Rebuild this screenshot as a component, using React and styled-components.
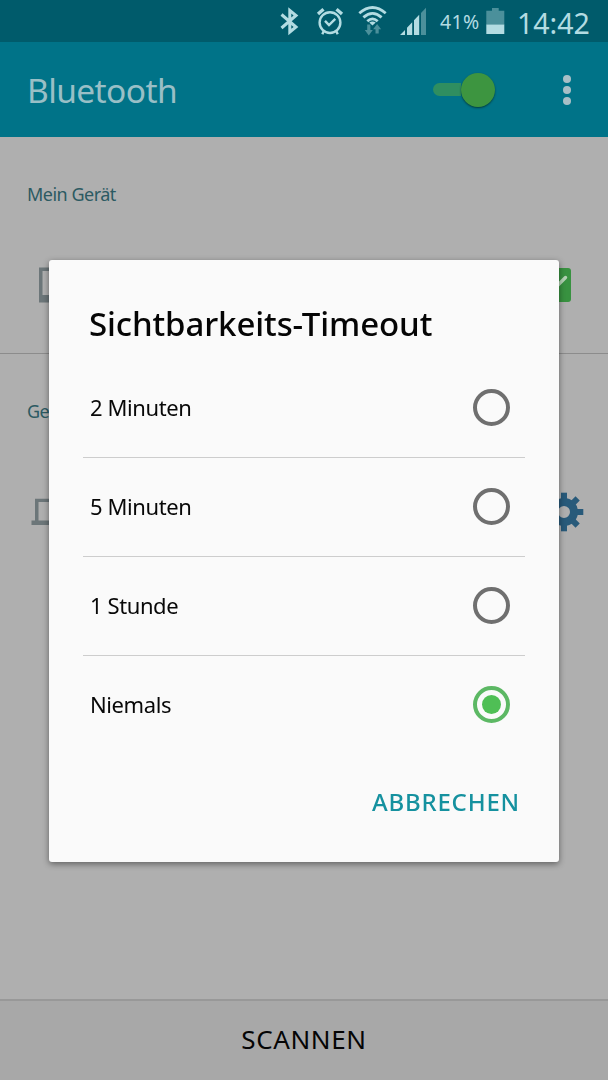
import React from 'react'
import styled, { createGlobalStyle } from 'styled-components';

const GlobalStyle = createGlobalStyle`
  body {
    margin : 0;
    font-family : "Noto Sans", "Open Sans", sans-serif;
    background-color : #afafaf;
  }
`;

const Screen = styled.div`
  width : 608px;
  height : 1080px;
  display : flex;
  flex-direction : column;
  overflow : hidden;
`;

const StatusBar = styled.div`
  height : 42px;
  flex : none;
  display : flex;
  align-items : center;
  box-sizing : border-box;
  padding-left : 280px;
  background-color : #005b6b;
  color : #b3dce2;
`;

const StatusIcon = styled.svg`
  flex : none;
  height : 42px;
  width : ${(props) => props.$width}px;
  margin-left : ${(props) => props.$gap || 0}px;
`;

const Percent = styled.span`
  width : 46px;
  margin-left : 12px;
  padding-top : 2px;
  font-size : 19.5px;
  line-height : 24px;
  letter-spacing : 0.3px;
  white-space : nowrap;
`;

const Clock = styled.span`
  margin-left : 12px;
  padding-top : 3px;
  font-size : 28.5px;
  line-height : 36px;
  white-space : nowrap;
`;

const AppBar = styled.header`
  height : 95px;
  flex : none;
  display : flex;
  align-items : center;
  box-sizing : border-box;
  padding : 0 37px 0 27px;
  background-color : #007388;
`;

const AppTitle = styled.h1`
  flex : 1;
  margin : 0;
  font-size : 33.5px;
  font-weight : 400;
  line-height : 44px;
  letter-spacing : -0.6px;
  color : #99bfc6;
`;

const Switch = styled.div`
  width : 62px;
  height : 36px;
  display : flex;
  align-items : center;
  margin-right : 68px;
`;

const Track = styled.div`
  width : 28px;
  height : 13px;
  border-radius : 7px 0 0 7px;
  background-color : #2f8e60;
`;

const Thumb = styled.div`
  width : 34px;
  height : 34px;
  flex : none;
  border-radius : 50%;
  background-color : #3d9540;
  box-shadow : 0 1px 2px rgba(0, 40, 30, 0.7);
`;

const MoreMenu = styled.div`
  display : flex;
  flex-direction : column;
  gap : 3px;
`;

const Dot = styled.div`
  width : 8px;
  height : 8px;
  border-radius : 50%;
  background-color : #a9bfc6;
`;

const Content = styled.main`
  flex : 1;
`;

const SectionLabel = styled.h2`
  margin : 0;
  padding : 45px 0 0 27px;
  font-size : 18px;
  font-weight : 400;
  line-height : 24px;
  letter-spacing : -0.5px;
  color : #2c5a62;
`;

const DeviceRow = styled.div`
  height : ${(props) => props.$height}px;
  margin-top : 11px;
  display : flex;
  align-items : center;
  justify-content : space-between;
  padding : 0 ${(props) => props.$right}px 0 31px;
  border-bottom : ${(props) => (props.$divider ? '1px solid #8c8c8c' : 'none')};
`;

const CheckBox = styled.div`
  width : 34px;
  height : 34px;
  border-radius : 3px;
  background-color : #389240;
`;

const ScanButton = styled.button`
  height : 81px;
  flex : none;
  border : none;
  border-top : 2px solid #989898;
  padding : 0 0 3px;
  font-family : inherit;
  font-size : 26px;
  line-height : 36px;
  letter-spacing : 0.6px;
  color : #050505;
  background-color : #a8a8a8;
`;

const Overlay = styled.div`
  position : fixed;
  top : 0;
  left : 0;
  width : 608px;
  height : 1080px;
  display : flex;
  justify-content : center;
  align-items : flex-start;
  box-sizing : border-box;
  padding-top : 260px;
`;

const Dialog = styled.div`
  width : 510px;
  height : 602px;
  box-sizing : border-box;
  padding : 0 34px;
  border-radius : 3px;
  background-color : #fafafa;
  box-shadow : 0 2px 6px rgba(0, 0, 0, 0.45);
`;

const DialogTitle = styled.h2`
  height : 99px;
  margin : 0;
  box-sizing : border-box;
  padding : 41px 0 0 6px;
  font-size : 33px;
  font-weight : 500;
  line-height : 46px;
  letter-spacing : -0.1px;
  white-space : nowrap;
  color : #050505;
`;

const Option = styled.div`
  height : 98px;
  display : flex;
  align-items : center;
  justify-content : space-between;
  padding : 0 15px 0 7px;
  border-bottom : 1px solid ${(props) => (props.$last ? 'transparent' : '#cdcdcd')};
`;

const OptionLabel = styled.span`
  padding-bottom : 2px;
  font-size : 22px;
  line-height : 30px;
  letter-spacing : -0.4px;
  color : #080808;
`;

const Radio = styled.div`
  width : 37px;
  height : 37px;
  display : flex;
  align-items : center;
  justify-content : center;
  box-sizing : border-box;
  margin-bottom : 1px;
  border-radius : 50%;
  border : 4px solid ${(props) => (props.$checked ? '#5cb864' : '#6f6f6f')};
`;

const RadioDot = styled.div`
  width : 19px;
  height : 19px;
  border-radius : 50%;
  background-color : #4fbf55;
`;

const Actions = styled.div`
  display : flex;
  justify-content : flex-end;
  padding : 30px 5px 0 0;
`;

const CancelButton = styled.button`
  border : none;
  padding : 0;
  font-family : inherit;
  font-size : 24px;
  font-weight : 500;
  line-height : 34px;
  letter-spacing : 0.8px;
  color : #15919f;
  background : none;
`;

const options = [
  { id: 1, label: '2 Minuten' },
  { id: 2, label: '5 Minuten' },
  { id: 3, label: '1 Stunde' },
  { id: 4, label: 'Niemals', checked: true },
];

const teeth = [0, 45, 90, 135, 180, 225, 270, 315];

const BluetoothIcon = () => (
  <StatusIcon $width={20} viewBox="0 0 20 42">
    <path d="M1.5 14.5 L16 27 L9.8 32 V10.4 L16 15.5 L1.5 28" fill="none" stroke="currentColor" strokeWidth="3" />
  </StatusIcon>
);

const AlarmIcon = () => (
  <StatusIcon $width={28} $gap={16} viewBox="0 0 28 42">
    <g fill="none" stroke="currentColor">
      <circle cx="14" cy="22.6" r="10.4" strokeWidth="2.4" />
      <path d="M9 20.8 L13 25 L19.3 18.8" strokeWidth="2.4" />
      <path d="M2 14 L7.5 9.3 M26 14 L20.5 9.3" strokeWidth="3.4" />
      <path d="M7.8 31 L6.3 34.3 M20.2 31 L21.7 34.3" strokeWidth="2.4" />
    </g>
  </StatusIcon>
);

const WifiIcon = () => (
  <StatusIcon $width={30} $gap={14} viewBox="0 0 30 42">
    <g fill="none" stroke="currentColor" strokeWidth="2.8">
      <path d="M1.3 13.2 Q14.5 1.8 27.7 13.2" />
      <path d="M5.4 17.4 Q14.5 9.4 23.6 17.4" />
      <path d="M9.3 21.2 Q14.5 16.6 19.7 21.2" />
    </g>
    <path d="M11.3 22.6 Q14.5 20.2 17.7 22.6 L14.5 25.6 Z" fill="currentColor" />
    <path d="M9.2 24.5 h3.2 v5.5 h2.4 L10.8 35.6 L6.8 30 h2.4 Z" fill="#4b909b" />
    <path d="M17.5 33.5 h3.2 v-4.3 h2.4 L19.1 24 L15.1 29.2 h2.4 Z" fill="#4b909b" />
  </StatusIcon>
);

const SignalIcon = () => (
  <StatusIcon $width={28} $gap={12} viewBox="0 0 28 42">
    <path d="M0 35 L5 30 V35 Z M7 35 V27.7 L12.2 22.2 V35 Z M14 35 V20.3 L19.2 14.8 V35 Z" fill="currentColor" />
    <path d="M21 35 V13 L26 7.8 V35 Z" fill="#4b909b" />
  </StatusIcon>
);

const BatteryIcon = () => (
  <StatusIcon $width={19} viewBox="0 0 19 42">
    <path d="M0.3 25 V10.8 H6 V8 H12.7 V10.8 H18.3 V25 Z" fill="#4b909b" />
    <path d="M0.3 24.6 H18.3 V34 H0.3 Z" fill="currentColor" />
  </StatusIcon>
);

const PhoneIcon = () => (
  <svg width="38" height="36" viewBox="0 0 38 36">
    <path d="M8 0.5 H34 V35.5 H8 Z M11.5 4 V28 H30.5 V4 Z" fill="#6c7679" fillRule="evenodd" />
  </svg>
);

const LaptopIcon = () => (
  <svg width="42" height="28" viewBox="0 0 42 28">
    <path d="M4 0.8 H38 V22.5 H41.5 V27 H0.5 V22.5 H4 Z M7.5 4 V22.5 H34.5 V4 Z" fill="#6c7679" fillRule="evenodd" />
  </svg>
);

const GearIcon = () => (
  <svg width="40" height="40" viewBox="-20 -20 40 40">
    <circle r="10" fill="none" stroke="#285a7a" strokeWidth="8" />
    {teeth.map((angle) => (
      <rect key={angle} x="-3" y="-19.3" width="6" height="8" fill="#285a7a" transform={`rotate(${angle})`} />
    ))}
  </svg>
);

export const App = () => {
  return (
    <Screen>
      <GlobalStyle />
      <StatusBar>
        <BluetoothIcon />
        <AlarmIcon />
        <WifiIcon />
        <SignalIcon />
        <Percent>41%</Percent>
        <BatteryIcon />
        <Clock>14:42</Clock>
      </StatusBar>
      <AppBar>
        <AppTitle>Bluetooth</AppTitle>
        <Switch>
          <Track />
          <Thumb />
        </Switch>
        <MoreMenu>
          <Dot />
          <Dot />
          <Dot />
        </MoreMenu>
      </AppBar>
      <Content>
        <SectionLabel>Mein Gerät</SectionLabel>
        <DeviceRow $height={136} $right={37} $divider>
          <PhoneIcon />
          <CheckBox>
            <svg width="34" height="34" viewBox="0 0 34 34">
              <path d="M7 17 L14 24 L28.5 9.5" fill="none" stroke="#b4d2b4" strokeWidth="3.4" strokeLinecap="round" />
            </svg>
          </CheckBox>
        </DeviceRow>
        <SectionLabel>Ge</SectionLabel>
        <DeviceRow $height={156} $right={24}>
          <LaptopIcon />
          <GearIcon />
        </DeviceRow>
      </Content>
      <ScanButton>SCANNEN</ScanButton>

      <Overlay>
        <Dialog>
          <DialogTitle>Sichtbarkeits-Timeout</DialogTitle>
          {options.map((option) => (
            <Option key={option.id} $last={option.checked}>
              <OptionLabel>{option.label}</OptionLabel>
              <Radio $checked={option.checked}>
                {option.checked && <RadioDot />}
              </Radio>
            </Option>
          ))}
          <Actions>
            <CancelButton>ABBRECHEN</CancelButton>
          </Actions>
        </Dialog>
      </Overlay>
    </Screen>
  )
}

export default App;
